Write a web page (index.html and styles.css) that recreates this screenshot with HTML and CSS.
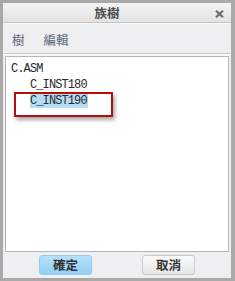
FILE: index.html
```html
<!DOCTYPE html>
<html>
<head>
<meta charset="utf-8">
<link rel="stylesheet" href="styles.css">
</head>
<body>
<div class="window">
  <div class="titlebar">
    <span class="title">族樹</span>
    <svg class="close" width="9" height="8" viewBox="0 0 9 8"><path d="M1 0.8 L8 7.2 M8 0.8 L1 7.2" stroke="#6b6b6b" stroke-width="2.2" fill="none"/></svg>
  </div>
  <div class="panel">
    <div class="menu">
      <span class="menu-item">樹</span>
      <span class="menu-item">編輯</span>
    </div>
    <div class="sep"></div>
    <div class="tree">
      <div class="node">C.ASM</div>
      <div class="node child">C_INST180</div>
      <div class="node child"><span class="sel">C_INST190</span></div>
      <div class="mark"></div>
    </div>
    <div class="buttons">
      <button class="btn primary">確定</button>
      <button class="btn">取消</button>
    </div>
  </div>
</div>
</body>
</html>
```

FILE: styles.css
```css
* { box-sizing: border-box; }
html, body { margin: 0; padding: 0; }
body { width: 235px; height: 281px; overflow: hidden; }
.window {
  width: 235px;
  height: 281px;
  background: #a9a9a9;
  padding: 3px 4px 3px 3px;
  display: flex;
  flex-direction: column;
  font-family: "Noto Sans CJK TC", "Liberation Sans", sans-serif;
}
.titlebar {
  height: 20px;
  background: linear-gradient(#f4f4f4, #e2e2e2);
  border-bottom: 1px solid #c4c4c4;
  display: flex;
  align-items: center;
  justify-content: center;
  position: relative;
}
.title {
  font-size: 12.5px;
  font-weight: bold;
  color: #4a4a4a;
  margin-left: -20px;
  line-height: 14px;
}
.close {
  position: absolute;
  right: 7px;
  top: 7px;
}
.panel {
  flex: 1;
  background: #eeeff1;
  display: flex;
  flex-direction: column;
  border-top: 1px solid #f8f8f8;
}
.menu {
  height: 29px;
  display: flex;
  align-items: center;
  padding-left: 9px;
  gap: 19px;
}
.menu-item {
  font-size: 12.5px;
  color: #5a6678;
  line-height: 14px;
  padding-top: 2px;
}
.sep {
  height: 3px;
  margin: 0 1px 0 1px;
  border-top: 1px solid #c9c9c9;
  background: #f9f9f9;
}
.tree {
  margin: 0 2px 0 2px;
  height: 196px;
  background: #fff;
  border: 1px solid #b6b6b6;
  padding: 4px 0 0 5px;
  position: relative;
  font-family: "Liberation Mono", monospace;
  font-size: 12px;
  letter-spacing: -0.9px;
  color: #2a2a2a;
}
.node { height: 16px; line-height: 16px; white-space: nowrap; }
.child { padding-left: 19px; }
.sel { background: #b5def6; padding: 0 1px 0 0; }
.mark {
  position: absolute;
  left: 8px;
  top: 35px;
  width: 99px;
  height: 25px;
  border: 2px solid #b40d0d;
  box-shadow: 2px 3px 4px rgba(0,0,0,0.35);
}
.buttons {
  display: flex;
  padding: 3px 0 0 36px;
  gap: 50px;
}
.btn {
  width: 53px;
  height: 20px;
  border: 1px solid #c8c8c8;
  border-radius: 3px;
  background: linear-gradient(#fbfbfb, #e6e6e6);
  font-family: "Noto Sans CJK TC", sans-serif;
  font-size: 12.5px;
  font-weight: bold;
  color: #333;
  padding: 0;
  line-height: 16px;
}
.btn.primary {
  background: linear-gradient(#b4e0fb, #92cff6);
  border-color: #9ccbe8;
}
```
